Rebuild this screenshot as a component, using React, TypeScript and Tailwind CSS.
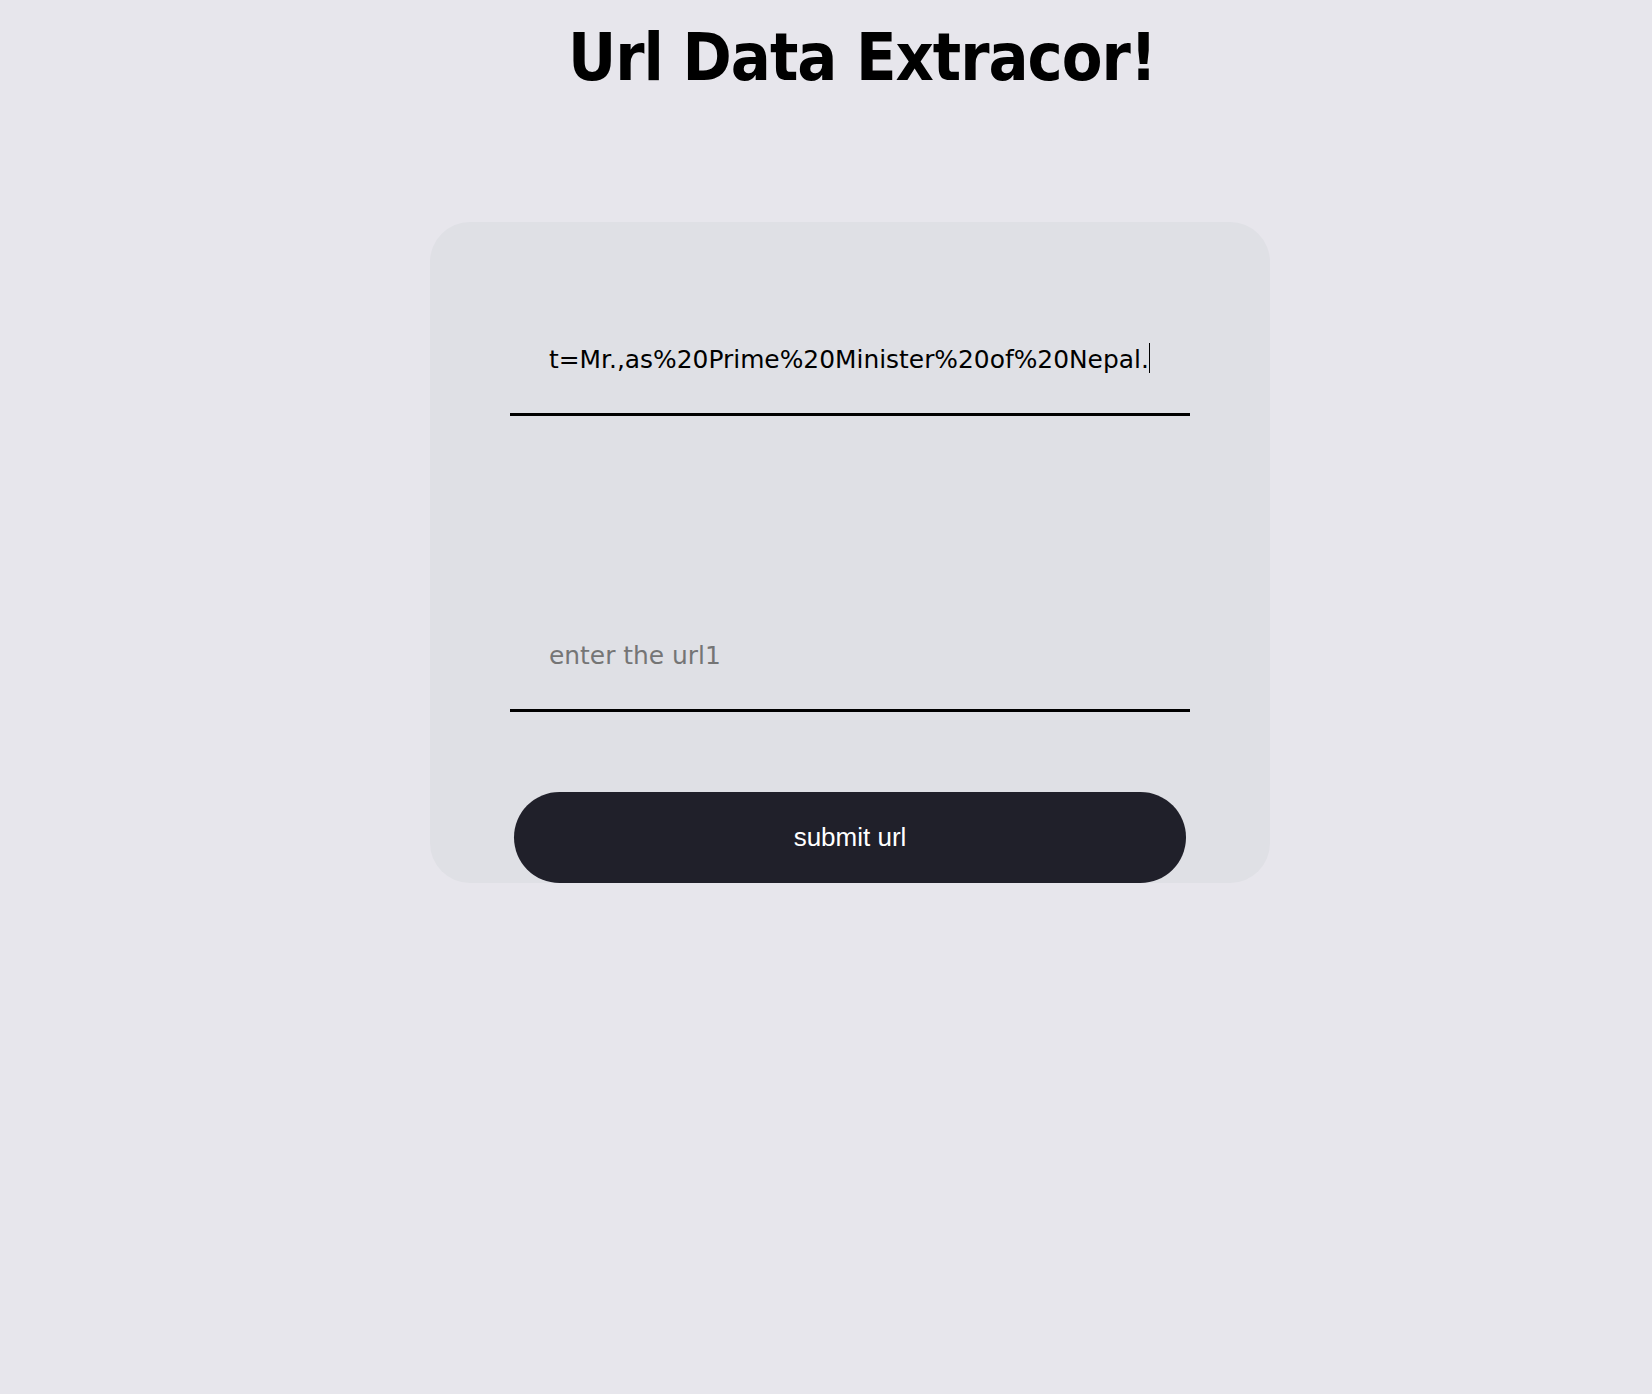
export default function App() {
  return (
    <div className="min-h-screen bg-[#e7e6ec] pt-[25px]">
      <h1 className="ml-[72px] text-center font-['DejaVu_Sans_Condensed','DejaVu_Sans',sans-serif] text-[66px] leading-none font-bold tracking-[-1px] text-black">
        Url Data Extracor!
      </h1>

      <div className="mt-[131px] ml-[430px] flex w-[840px] flex-col items-center rounded-[40px] bg-[#dfe0e5] pt-[84px]">
        <div className="relative">
          <input
            type="text"
            defaultValue="t=Mr.,as%20Prime%20Minister%20of%20Nepal."
            className="h-[110px] w-[680px] border-b-[3px] border-black bg-transparent pl-[39px] font-['DejaVu_Sans',sans-serif] text-[24.9px] text-black caret-transparent outline-none"
          />
          {/* text caret */}
          <span className="pointer-events-none absolute top-[37px] left-[639px] h-[30px] w-px bg-black"></span>
        </div>
        <input
          type="text"
          placeholder="enter the url1"
          className="mt-[186px] h-[110px] w-[680px] border-b-[3px] border-black bg-transparent pl-[39px] font-['DejaVu_Sans',sans-serif] text-[24.9px] text-black outline-none placeholder:text-[#757575]"
        />
        <button
          type="button"
          className="mt-[80px] h-[91px] w-[672px] rounded-full bg-[#20202a] font-['Liberation_Sans',Arial,sans-serif] text-[26px] text-white"
        >
          submit url
        </button>
      </div>
    </div>
  )
}
